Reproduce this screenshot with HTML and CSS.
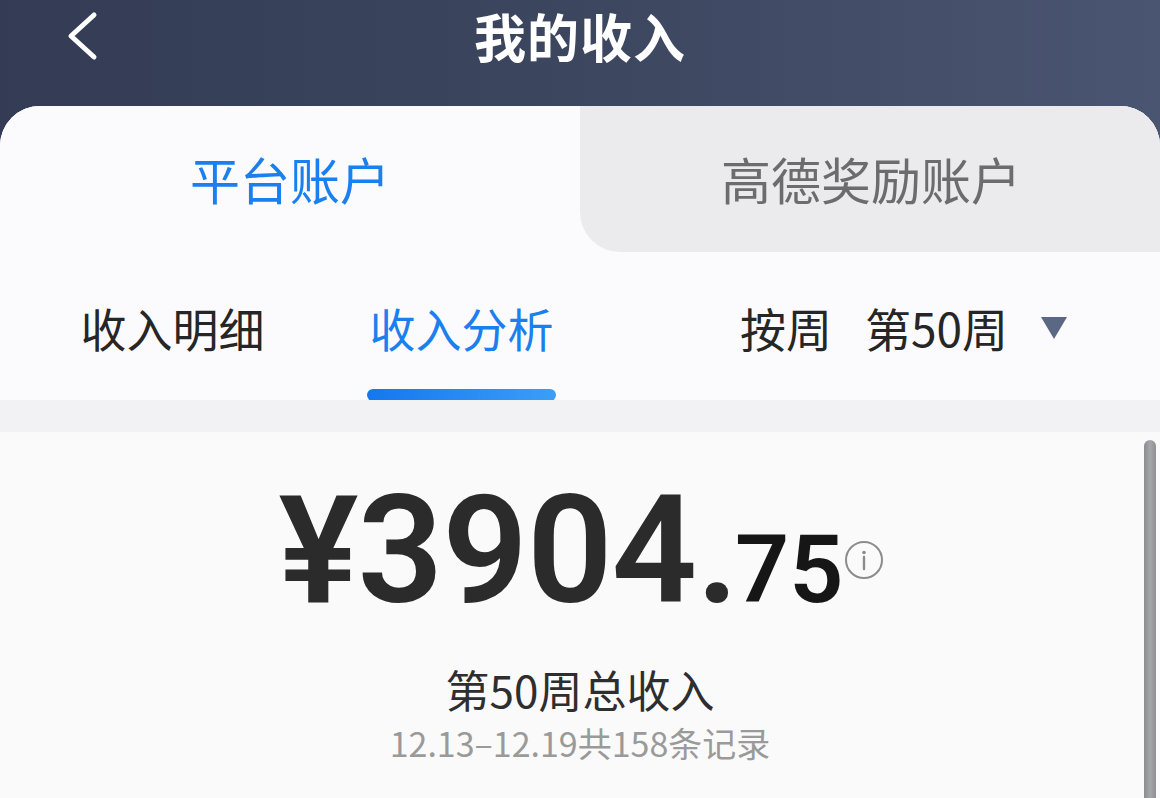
FILE: index.html
```html
<!DOCTYPE html>
<html lang="zh-CN">
<head>
<meta charset="utf-8">
<title>我的收入</title>
<link rel="stylesheet" href="styles.css">
</head>
<body>
<div class="app">
  <header class="topbar">
    <div class="back">
      <svg width="34" height="50" viewBox="0 0 34 50"><polyline points="28,4 5,25 28,46" fill="none" stroke="#ffffff" stroke-width="5" stroke-linecap="round" stroke-linejoin="round"/></svg>
    </div>
    <h1 class="title">我的收入</h1>
    <div></div>
  </header>
  <main class="card">
    <div class="acct-tabs">
      <div class="acct-tab active">平台账户</div>
      <div class="acct-tab inactive">高德奖励账户</div>
    </div>
    <nav class="subtabs">
      <div class="subtab"><span class="subtab-text">收入明细</span><span class="bar"></span></div>
      <div class="subtab current"><span class="subtab-text">收入分析</span><span class="bar"></span></div>
      <div class="period">
        <span>按周</span>
        <span>第50周</span>
        <svg class="caret" width="26" height="22" viewBox="0 0 26 22"><polygon points="0,0 26,0 13,22" fill="#5a6884"/></svg>
      </div>
    </nav>
    <div class="band"></div>
    <section class="summary">
      <div class="amount"><span class="int">¥3904.</span><span class="dec">75</span><svg class="info" width="40" height="40" viewBox="0 0 40 40"><circle cx="20" cy="20" r="18" fill="none" stroke="#8c8c8c" stroke-width="2"/><circle cx="20" cy="12.5" r="1.8" fill="#8c8c8c"/><line x1="20" y1="17" x2="20" y2="29" stroke="#8c8c8c" stroke-width="2.4" stroke-linecap="round"/></svg></div>
      <div class="caption">第50周总收入</div>
      <div class="range">12.13–12.19共158条记录</div>
      <div class="scroll-thumb"></div>
    </section>
  </main>
</div>
</body>
</html>
```

FILE: styles.css
```css
* { box-sizing: border-box; margin: 0; padding: 0; }
html, body { width: 1160px; height: 798px; overflow: hidden; }
body {
  font-family: "Noto Sans CJK SC", "Noto Sans", sans-serif;
  background: linear-gradient(90deg, #333c54 0%, #3c465f 50%, #4a5571 100%);
  color: #262626;
}
.app { display: flex; flex-direction: column; height: 798px; }

.topbar {
  height: 106px;
  display: grid;
  grid-template-columns: 1fr auto 1fr;
  align-items: start;
}
.back { padding: 11px 0 0 66px; }
.back svg { display: block; }
.title {
  font-size: 52px;
  font-weight: 700;
  line-height: 72px;
  color: #ffffff;
  letter-spacing: 1px;
}

.card {
  flex: 1;
  position: relative;
  background: #fafafb;
  border-radius: 40px 40px 0 0;
  overflow: hidden;
  display: flex;
  flex-direction: column;
}
.acct-tabs {
  display: flex;
  height: 146px;
  background: linear-gradient(#ebebed, #ebebed) right top / 50% 50% no-repeat, #fbfbfd;
}
.acct-tab {
  display: flex;
  align-items: center;
  justify-content: center;
  font-size: 50px;
  padding-bottom: 2px;
}
.acct-tab.active {
  width: 580px;
  background: #fbfbfd;
  border-top-right-radius: 40px;
  color: #1a7fef;
}
.acct-tab.inactive {
  flex: 1;
  background: #ebebed;
  border-bottom-left-radius: 40px;
  color: #6c6c6e;
  padding-left: 2px;
}

.subtabs {
  display: flex;
  align-items: flex-start;
  height: 148px;
  padding: 0 93px 0 78px;
  background: #fbfbfd;
}
.subtab {
  display: flex;
  flex-direction: column;
  align-items: center;
  margin-right: 100px;
}
.subtab-text {
  font-size: 46px;
  line-height: 60px;
  margin-top: 45px;
  color: #262626;
}
.bar {
  width: 189px;
  height: 12px;
  margin-top: 32px;
  border-radius: 6px;
  background: transparent;
}
.subtab.current .subtab-text { color: #1a7fef; }
.subtab.current .bar { background: linear-gradient(90deg, #1577ee, #3b9ef7); }
.period {
  margin-left: auto;
  display: flex;
  align-items: center;
  gap: 33px;
  font-size: 46px;
  line-height: 60px;
  margin-top: 45px;
  color: #262626;
}
.caret { display: block; margin-top: 2px; }

.band { height: 32px; background: #f2f2f4; }

.summary {
  flex: 1;
  position: relative;
  background: #fafafa;
  text-align: center;
}
.amount {
  margin-top: 44px;
  padding-left: 2px;
  font-family: Roboto, "Liberation Sans", sans-serif;
  font-weight: 600;
  line-height: 150px;
  height: 150px;
  white-space: nowrap;
}
.int { font-size: 150px; color: #2b2b2b; letter-spacing: -1px; }
.dec { font-size: 95px; color: #161616; line-height: 1; margin-left: -3px; }
.info { display: inline-block; vertical-align: 22px; margin-left: 0; }
.caption {
  margin-top: 38px;
  font-size: 44px;
  line-height: 50px;
  color: #2e2e2e;
}
.range {
  font-size: 34px;
  line-height: 40px;
  color: #9a9a9a;
  margin-top: 9px;
}
.scroll-thumb {
  position: absolute;
  top: 8px;
  right: 4px;
  width: 12px;
  height: 420px;
  border-radius: 6px 6px 0 0;
  background: linear-gradient(90deg, #8a8c90, #a4a6aa 50%, #8e9094);
}
```
